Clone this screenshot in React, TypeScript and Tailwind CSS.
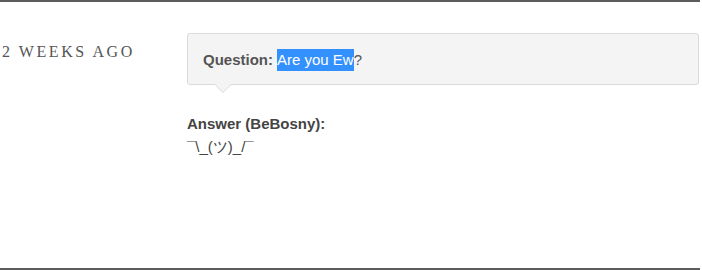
export default function App() {
  return (
    <div className="w-[702px] h-[270px] bg-white relative overflow-hidden" style={{ fontFamily: '"Liberation Sans", Arial, sans-serif' }}>
      <div className="h-[2px] w-[700px] bg-[#5c5c5c]" />
      <div className="flex pt-[31px] h-[266px]">
        <div className="w-[187px] pl-[2px] pt-[7px]">
          <p className="text-[16px] tracking-[0.16em] uppercase text-[#555]" style={{ fontFamily: '"Liberation Serif", "Times New Roman", serif' }}>
            2 weeks ago
          </p>
        </div>
        <div className="w-[512px]">
          <div className="relative h-[52px] bg-[#f4f4f4] border border-[#dadada] rounded-[3px] flex items-center pl-[15px] pt-[2px] text-[15px] text-[#555]">
            <span className="font-bold mr-1">Question:</span>
            <span className="bg-[#3390ff] text-white">Are you Ew</span>
            <span>?</span>
            <div className="absolute left-[26px] bottom-[-9px] w-0 h-0 border-l-[9px] border-r-[9px] border-t-[9px] border-l-transparent border-r-transparent border-t-[#dadada]" />
            <div className="absolute left-[27px] bottom-[-8px] w-0 h-0 border-l-[8px] border-r-[8px] border-t-[8px] border-l-transparent border-r-transparent border-t-[#f4f4f4]" />
          </div>
          <div className="mt-[28px] text-[15px] text-[#444] leading-[21px]">
            <p className="font-bold">Answer (BeBosny):</p>
            <p className="mt-[2px]">¯\_(ツ)_/¯</p>
          </div>
        </div>
      </div>
      <div className="h-[2px] w-[700px] bg-[#5c5c5c]" />
    </div>
  );
}
